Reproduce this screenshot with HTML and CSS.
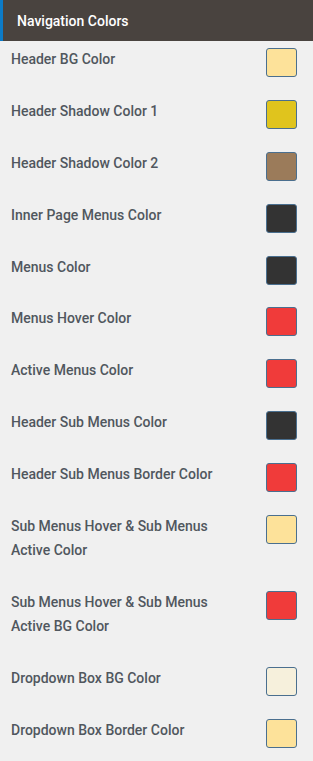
FILE: index.html
```html
<!DOCTYPE html>
<html>
<head>
    <title>Navigation Colors</title>
    <link rel="stylesheet" href="styles.css">
</head>
<body>
    <div class="panel">
        <h3 class="panel-title">Navigation Colors</h3>

        <div class="row">
            <label>Header BG Color</label>
            <span class="swatch" style="background:#fde29a"></span>
        </div>
        <div class="row">
            <label>Header Shadow Color 1</label>
            <span class="swatch" style="background:#e0c41d"></span>
        </div>
        <div class="row">
            <label>Header Shadow Color 2</label>
            <span class="swatch" style="background:#9b7b5a"></span>
        </div>
        <div class="row">
            <label>Inner Page Menus Color</label>
            <span class="swatch" style="background:#333333"></span>
        </div>
        <div class="row">
            <label>Menus Color</label>
            <span class="swatch" style="background:#333333"></span>
        </div>
        <div class="row">
            <label>Menus Hover Color</label>
            <span class="swatch" style="background:#f03b3a"></span>
        </div>
        <div class="row">
            <label>Active Menus Color</label>
            <span class="swatch" style="background:#f03b3a"></span>
        </div>
        <div class="row">
            <label>Header Sub Menus Color</label>
            <span class="swatch" style="background:#333333"></span>
        </div>
        <div class="row">
            <label>Header Sub Menus Border Color</label>
            <span class="swatch" style="background:#f03b3a"></span>
        </div>
        <div class="row">
            <label>Sub Menus Hover &amp; Sub Menus<br>Active Color</label>
            <span class="swatch" style="background:#fde29a"></span>
        </div>
        <div class="row">
            <label>Sub Menus Hover &amp; Sub Menus<br>Active BG Color</label>
            <span class="swatch" style="background:#f03b3a"></span>
        </div>
        <div class="row">
            <label>Dropdown Box BG Color</label>
            <span class="swatch" style="background:#f6f0dc"></span>
        </div>
        <div class="row">
            <label>Dropdown Box Border Color</label>
            <span class="swatch" style="background:#fde29a"></span>
        </div>
    </div>
</body>
</html>
```

FILE: styles.css
```css
body {
    margin: 0;
    background: #f0f0f0;
    font-family: Roboto, 'Liberation Sans', sans-serif;
}

.panel {
    width: 100%;
}

.panel-title {
    margin: 0;
    height: 41px;
    display: flex;
    align-items: center;
    padding-left: 14px;
    border-left: 3px solid #0c7bc7;
    background: #49433f;
    color: #fff;
    font-size: 14px;
    font-weight: 500;
}

.row {
    display: flex;
    justify-content: space-between;
    align-items: flex-start;
    padding: 6px 16px 0 11px;
}

.row label {
    padding-bottom: 21.9px;
    font-size: 14px;
    font-weight: 500;
    line-height: 24px;
    color: #50575e;
}

.swatch {
    flex: none;
    width: 29px;
    height: 27px;
    margin-top: 1px;
    border: 1px solid #4a6f8f;
    border-radius: 3px;
}
```
